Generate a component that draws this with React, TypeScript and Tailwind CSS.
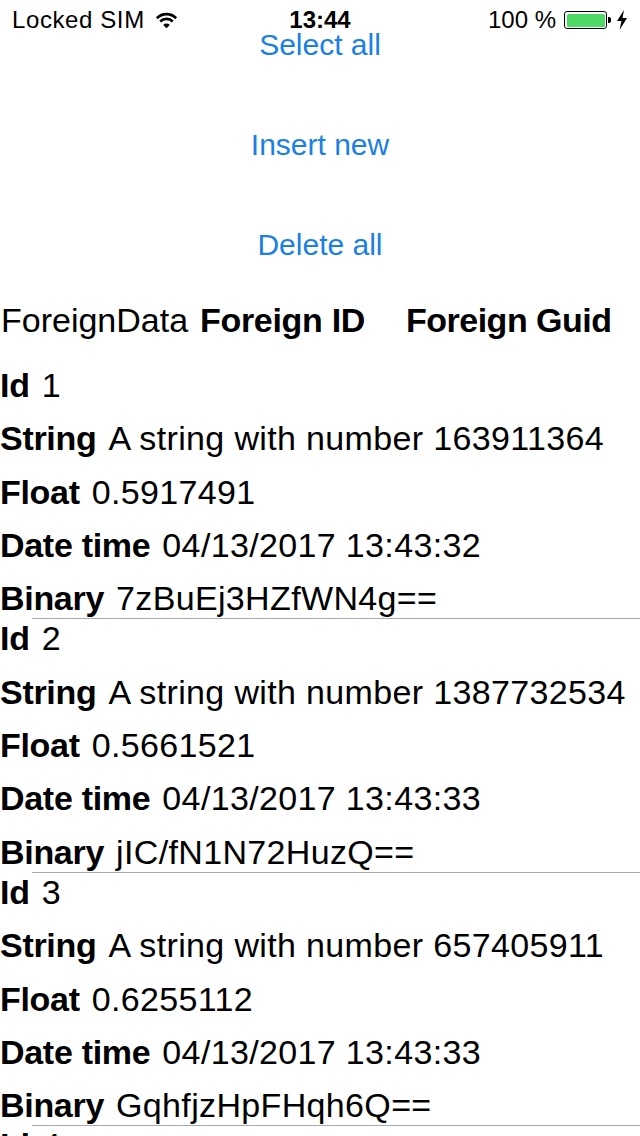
import React from "react";

const font = { fontFamily: '"Liberation Sans", Arial, sans-serif' };

type Rec = { id: string; str: string; flt: string; dt: string; bin: string };

const records: Rec[] = [
  { id: "1", str: "A string with number 163911364", flt: "0.5917491", dt: "04/13/2017 13:43:32", bin: "7zBuEj3HZfWN4g==" },
  { id: "2", str: "A string with number 1387732534", flt: "0.5661521", dt: "04/13/2017 13:43:33", bin: "jIC/fN1N72HuzQ==" },
  { id: "3", str: "A string with number 657405911", flt: "0.6255112", dt: "04/13/2017 13:43:33", bin: "GqhfjzHpFHqh6Q==" },
  { id: "4", str: "A string with number 1024583310", flt: "0.3318842", dt: "04/13/2017 13:43:33", bin: "Qm9vLk3Xc2FtPw==" },
];

function Field({ label, value }: { label: string; value: string }) {
  return (
    <div className="flex h-[38px] items-center gap-[12px] whitespace-nowrap text-[34px] leading-[38px] text-black">
      <span className="font-bold tracking-[-0.3px]">{label}</span>
      <span className="tracking-[0.35px]">{value}</span>
    </div>
  );
}

function Record({ r }: { r: Rec }) {
  return (
    <div className="flex flex-col">
      <div className="flex flex-col gap-[15.3px] pb-[1.3px]">
        <Field label="Id" value={r.id} />
        <Field label="String" value={r.str} />
        <Field label="Float" value={r.flt} />
        <Field label="Date time" value={r.dt} />
        <Field label="Binary" value={r.bin} />
      </div>
      <div className="ml-[32px] h-px bg-[#a9a9ad]" />
    </div>
  );
}

function Wifi() {
  return (
    <svg width="23" height="17" viewBox="0 0 22 16" className="ml-[10px]">
      <path d="M1.8 5.8 A13 13 0 0 1 20.2 5.8" fill="none" stroke="#000" strokeWidth="2.6" />
      <path d="M5 9 A8.5 8.5 0 0 1 17 9" fill="none" stroke="#000" strokeWidth="2.6" />
      <path d="M11 15.5 L7.9 12.2 A4.3 4.3 0 0 1 14.1 12.2 Z" fill="#000" />
    </svg>
  );
}

function StatusBar() {
  return (
    <div className="absolute left-0 top-0 flex h-[40px] w-[640px] items-center text-[24px] text-black" style={font}>
      <div className="flex flex-1 items-center pl-[12px]">
        <span className="tracking-[0.6px]">Locked SIM</span>
        <Wifi />
      </div>
      <div className="absolute left-1/2 top-0 flex h-[40px] -translate-x-1/2 items-center font-bold">13:44</div>
      <div className="flex items-center pr-[12px]">
        <span>100 %</span>
        <div className="ml-[8px] flex items-center">
          <div className="flex h-[18px] w-[43px] items-center rounded-[3px] border-[1.5px] border-black p-[1.5px]">
            <div className="h-full w-full rounded-[1.5px] bg-[#4cd964]" />
          </div>
          <div className="ml-[1px] h-[6px] w-[3px] rounded-r-[2px] bg-black" />
        </div>
        <svg width="12" height="20" viewBox="0 0 12 20" className="ml-[5px]">
          <path d="M8 0 L1 11 H5.5 L3.5 20 L11 8 H6.5 L8 0 Z" fill="#000" />
        </svg>
      </div>
    </div>
  );
}

export default function App() {
  return (
    <div className="relative h-[1136px] w-[640px] overflow-hidden bg-white" style={font}>
      <div className="flex flex-col">
        <div className="flex flex-col items-center gap-[40px] pt-[15px]">
          {["Select all", "Insert new", "Delete all"].map((t) => (
            <button key={t} className="h-[60px] text-[30px] leading-[60px] text-[#1a80e5]">
              {t}
            </button>
          ))}
        </div>
        <div className="mt-[25px] flex h-[40px] items-center whitespace-nowrap text-[34px] leading-[40px] text-black">
          <span className="w-[200px] pl-[1px]">ForeignData</span>
          <span className="w-[206px] font-bold tracking-[-0.3px]">Foreign ID</span>
          <span className="font-bold tracking-[-0.5px]">Foreign Guid</span>
        </div>
        <div className="mt-[26px] flex flex-col">
          {records.map((r) => (
            <Record key={r.id} r={r} />
          ))}
        </div>
      </div>
      <StatusBar />
    </div>
  );
}
